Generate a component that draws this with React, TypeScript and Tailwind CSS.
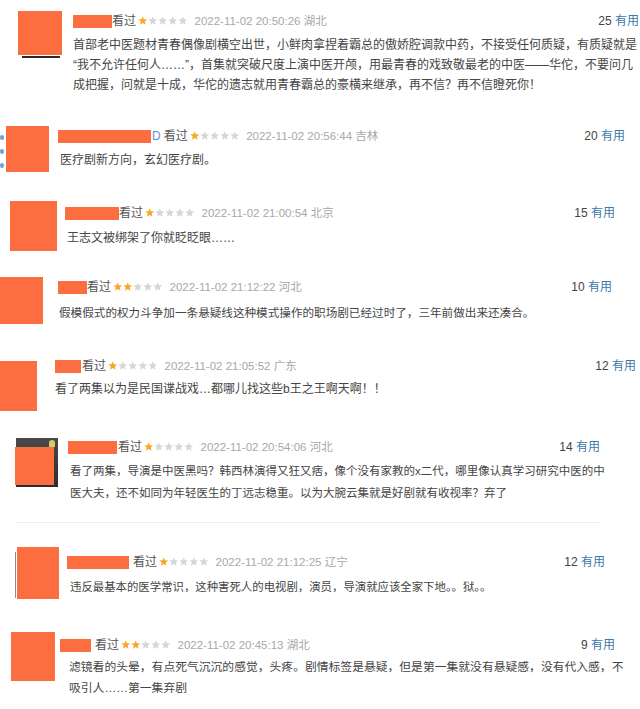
import React from "react";

const ORANGE = "bg-[#fc6e40]";

function Stars({ n }: { n: number }) {
  return (
    <span className="flex items-center gap-[0.5px]">
      {[0, 1, 2, 3, 4].map((i) => (
        <svg key={i} width="9.5" height="9.5" viewBox="0 0 10 10">
          <path
            d="M5 0.4l1.35 3.05 3.25.3-2.45 2.15.72 3.2L5 7.45 2.13 9.1l.72-3.2L.4 3.75l3.25-.3z"
            fill={i < n ? "#f9a825" : "#d6d6d6"}
          />
        </svg>
      ))}
    </span>
  );
}

type BlockProps = {
  wrap: string;
  avatar: React.ReactNode;
  col: string;
  header: string;
  bar: string;
  afterBar?: React.ReactNode;
  kanGap?: string;
  stars: number;
  date: string;
  count: string;
  textCls: string;
  lines: string[];
  bottom?: React.ReactNode;
};

function Block(p: BlockProps) {
  return (
    <div className={p.wrap}>
      <div className="flex">
        {p.avatar}
        <div className={p.col}>
          <div className={"flex items-center h-[14px] " + p.header}>
            <div className={"h-[13px] " + ORANGE + " " + p.bar} />
            {p.afterBar}
            <span className={"text-[12px] leading-[14px] text-[#555] " + (p.kanGap ?? "")}>看过</span>
            <span className="ml-[2px]">
              <Stars n={p.stars} />
            </span>
            <span className="ml-[7px] text-[11.5px] leading-[14px] text-[#a8a8a8]">{p.date}</span>
            <span className="ml-auto text-[12px] leading-[14px] whitespace-nowrap">
              <span className="text-[#444]">{p.count}</span>{" "}
              <span className="text-[#3a78ad]">有用</span>
            </span>
          </div>
          <div className={"whitespace-nowrap text-[#454545] " + p.textCls}>
            {p.lines.map((l, i) => (
              <div key={i}>{l}</div>
            ))}
          </div>
        </div>
      </div>
      {p.bottom}
    </div>
  );
}

export default function App() {
  return (
    <div className="w-[640px] h-[709px] overflow-hidden bg-white font-['Liberation_Sans','Noto_Sans_CJK_SC',sans-serif]">
      <Block
        wrap="h-[115px] pl-[18px] pt-[11px]"
        avatar={
          <div className="flex flex-col shrink-0">
            <div className={"w-[44px] h-[44px] " + ORANGE} />
            <div className="ml-[4px] mt-[1px] w-[38px] h-[2px] bg-[#2a2a2a]" />
          </div>
        }
        col="ml-[11px] mt-[3px]"
        header="w-[566px]"
        bar="w-[39px]"
        stars={1}
        date="2022-11-02 20:50:26 湖北"
        count="25"
        textCls="mt-[7px] text-[12px] leading-[20px]"
        lines={[
          "首部老中医题材青春偶像剧横空出世，小鲜肉拿捏着霸总的傲娇腔调款中药，不接受任何质疑，有质疑就是",
          "“我不允许任何人……”，首集就突破尺度上演中医开颅，用最青春的戏致敬最老的中医——华佗，不要问几",
          "成把握，问就是十成，华佗的遗志就用青春霸总的豪横来继承，再不信？再不信瞪死你！",
        ]}
      />
      <Block
        wrap="h-[80px] pt-[11px]"
        avatar={
          <div className="flex shrink-0">
            <div className="flex flex-col gap-[9px] pt-[9px] w-[6px]">
              <div className="w-[4px] h-[5px] bg-[#6fa4d6] rounded-full" />
              <div className="w-[4px] h-[5px] bg-[#6fa4d6] rounded-full" />
              <div className="w-[4px] h-[5px] bg-[#6fa4d6] rounded-full" />
            </div>
            <div className="flex flex-col">
              <div className={"w-[43px] h-[46px] " + ORANGE} />
            </div>
          </div>
        }
        col="ml-[9px] mt-[3px]"
        header="w-[567px]"
        bar="w-[93px]"
        afterBar={<span className="ml-[1px] text-[12px] leading-[14px] text-[#5b8fc9]">D</span>}
        kanGap="ml-[3px]"
        stars={1}
        date="2022-11-02 20:56:44 吉林"
        count="20"
        textCls="mt-[7px] pl-[2px] text-[12px] leading-[20px]"
        lines={["医疗剧新方向，玄幻医疗剧。"]}
      />
      <Block
        wrap="h-[75px] pl-[10px] pt-[6px]"
        avatar={<div className={"shrink-0 w-[47px] h-[50px] " + ORANGE} />}
        col="ml-[8px] mt-[5px]"
        header="w-[550px]"
        bar="w-[54px]"
        stars={1}
        date="2022-11-02 21:00:54 北京"
        count="15"
        textCls="mt-[8px] pl-[2px] text-[12px] leading-[20px]"
        lines={["王志文被绑架了你就眨眨眼……"]}
      />
      <Block
        wrap="h-[75px] pt-[7px]"
        avatar={<div className={"shrink-0 w-[43px] h-[47px] " + ORANGE} />}
        col="ml-[15px] mt-[3px]"
        header="w-[554px]"
        bar="w-[29px]"
        stars={2}
        date="2022-11-02 21:12:22 河北"
        count="10"
        textCls="mt-[9px] pl-[1px] text-[11.6px] leading-[20px]"
        lines={["假模假式的权力斗争加一条悬疑线这种模式操作的职场剧已经过时了，三年前做出来还凑合。"]}
      />
      <Block
        wrap="h-[80px] pt-[16px]"
        avatar={<div className={"shrink-0 w-[37px] h-[50px] " + ORANGE} />}
        col="ml-[18px] -mt-[2px]"
        header="w-[581px]"
        bar="w-[26px]"
        kanGap="ml-[1px]"
        stars={1}
        date="2022-11-02 21:05:52 广东"
        count="12"
        textCls="mt-[6px] text-[12px] leading-[20px]"
        lines={["看了两集以为是民国谍战戏…都哪儿找这些b王之王啊天啊！！"]}
      />
      <Block
        wrap="h-[105px] pl-[15px] pt-[13px] flex flex-col"
        avatar={
          <div className="relative shrink-0 ml-px w-[42px] h-[49px] bg-gradient-to-b from-[#4a4a4a] to-[#2c2c2c]">
            <div className="absolute right-[3px] top-[2px] w-[6px] h-[7px] bg-[#d8c86a] rounded-t-full" />
            <div className={"absolute -left-px top-[9px] w-[39px] h-[38px] " + ORANGE} />
          </div>
        }
        col="ml-[10px] mt-[2px]"
        header="w-[532px]"
        bar="w-[49px]"
        kanGap="ml-[1px]"
        stars={1}
        date="2022-11-02 20:54:06 河北"
        count="14"
        textCls="mt-[6px] pl-[2px] text-[11.5px] leading-[22px]"
        lines={[
          "看了两集，导演是中医黑吗？韩西林演得又狂又痞，像个没有家教的x二代，哪里像认真学习研究中医的中",
          "医大夫，还不如同为年轻医生的丁远志稳重。以为大腕云集就是好剧就有收视率？弃了",
        ]}
        bottom={<div className="mt-auto mb-[7px] w-[585px] h-px bg-[#ececec]" />}
      />
      <Block
        wrap="h-[85px] pl-[15px] pt-[17px]"
        avatar={
          <div className="flex shrink-0">
            <div className="mt-[5px] w-px h-[46px] bg-[#8c8c8c]" />
            <div className={"ml-px w-[42px] h-[52px] " + ORANGE} />
          </div>
        }
        col="ml-[8px] mt-[8px]"
        header="w-[538px]"
        bar="w-[62px]"
        kanGap="ml-[4px]"
        stars={1}
        date="2022-11-02 21:12:25 辽宁"
        count="12"
        textCls="mt-[8px] pl-[3px] text-[11.4px] leading-[20px]"
        lines={["违反最基本的医学常识，这种害死人的电视剧，演员，导演就应该全家下地。。狱。。"]}
      />
      <Block
        wrap="h-[94px] pl-[11px] pt-[17px]"
        avatar={<div className={"shrink-0 w-[44px] h-[49px] " + ORANGE} />}
        col="ml-[5px] mt-[6px]"
        header="w-[555px]"
        bar="w-[31px]"
        kanGap="ml-[4px]"
        stars={2}
        date="2022-11-02 20:45:13 湖北"
        count="9"
        textCls="mt-[5px] pl-[9px] text-[11.8px] leading-[21px]"
        lines={[
          "滤镜看的头晕，有点死气沉沉的感觉，头疼。剧情标签是悬疑，但是第一集就没有悬疑感，没有代入感，不",
          "吸引人……第一集弃剧",
        ]}
      />
    </div>
  );
}
